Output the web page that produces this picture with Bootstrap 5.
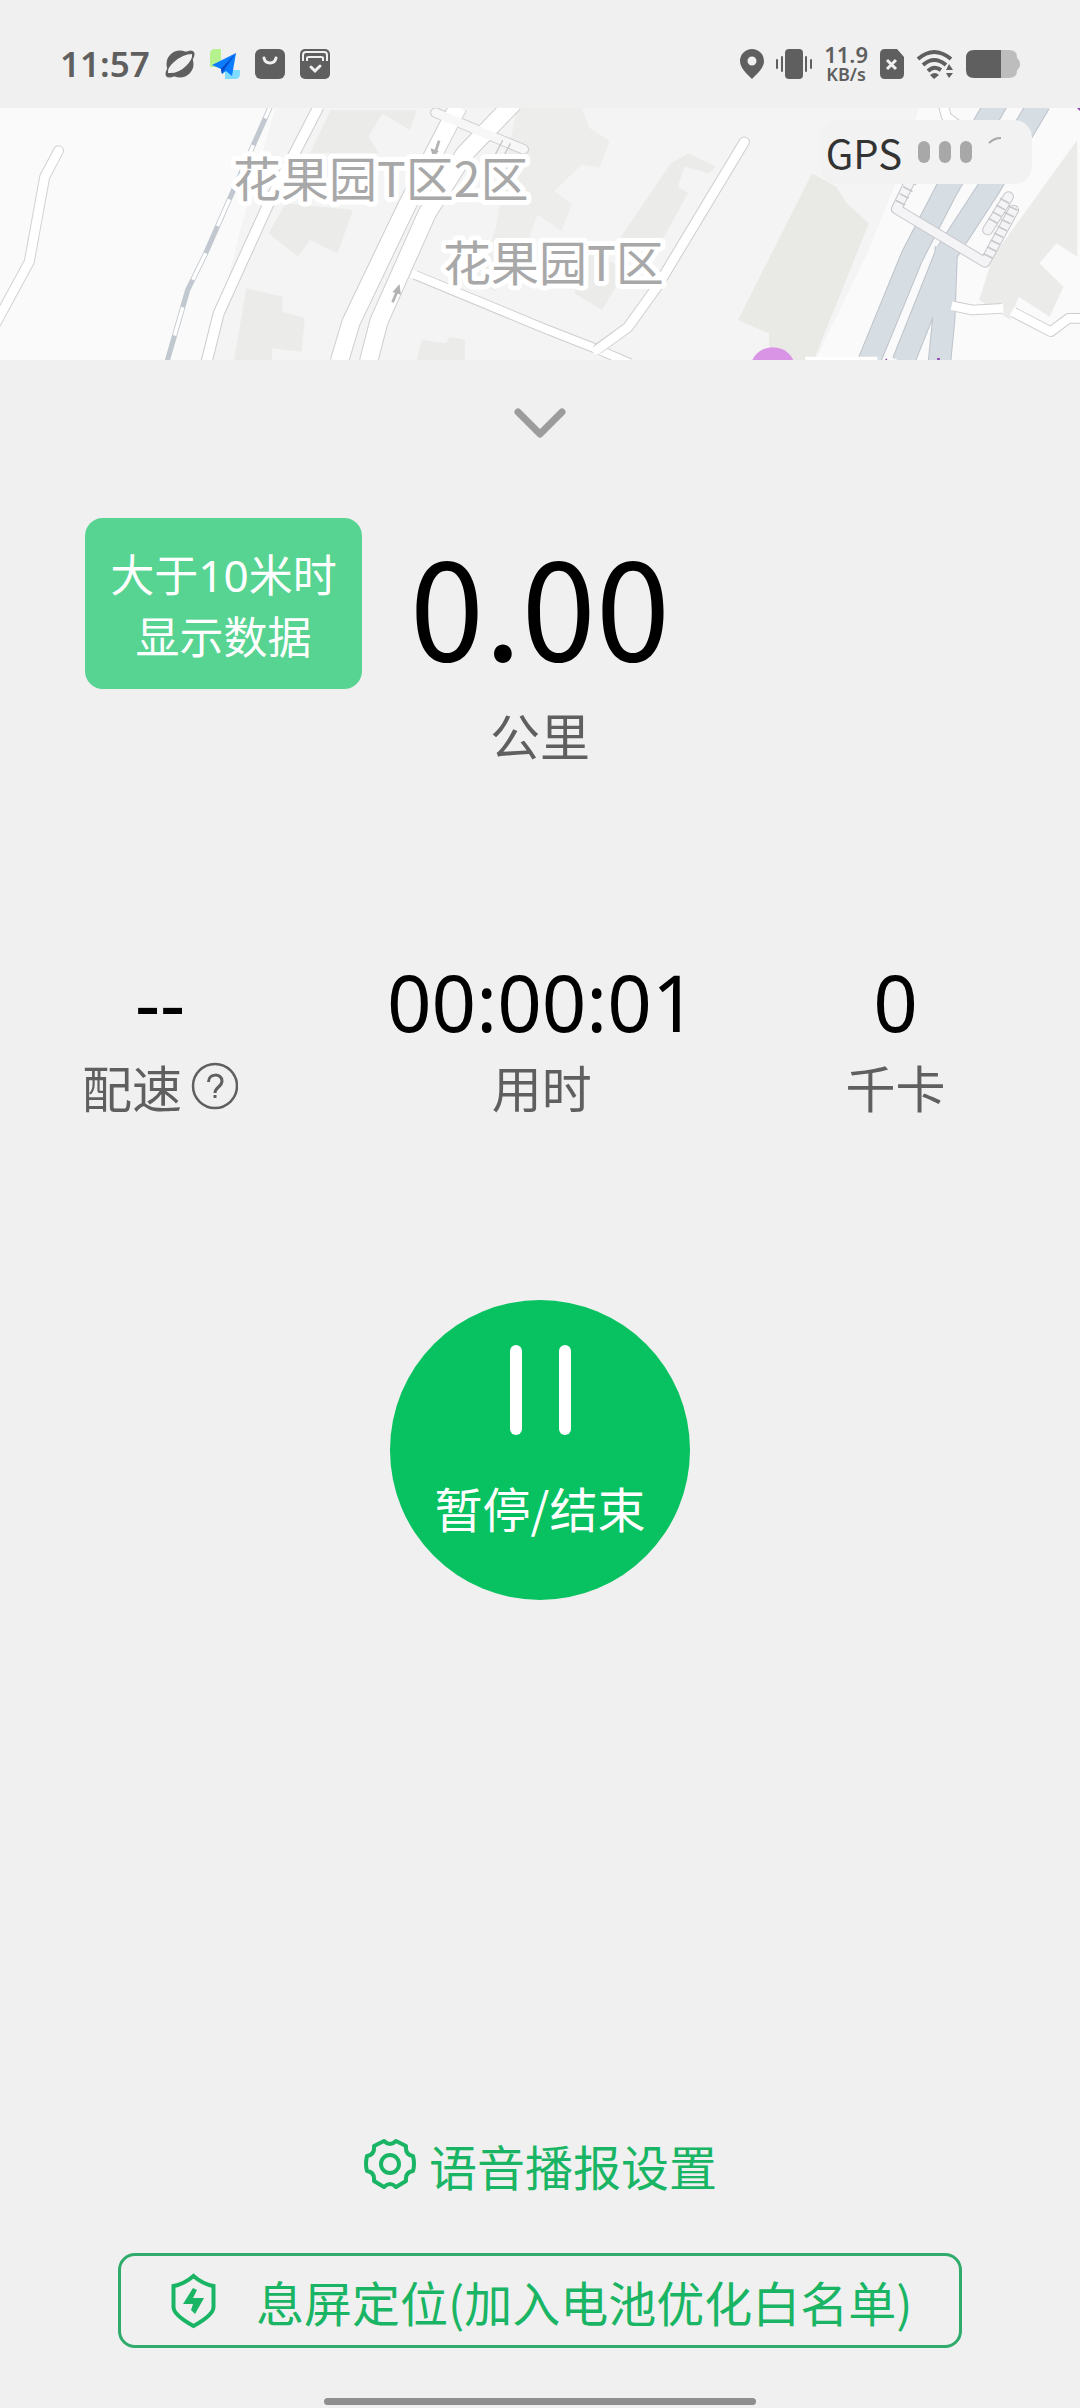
<!DOCTYPE html>
<html lang="zh-CN">
<head>
<meta charset="utf-8">
<meta name="viewport" content="width=device-width, initial-scale=1">
<title>跑步</title>
<link rel="stylesheet" href="https://cdn.jsdelivr.net/npm/bootstrap@5.3.0/dist/css/bootstrap.min.css">
<style>
:root{--run-green:#08c160;--run-link:#19b564;--ink-soft:#5f5f5f}
body{background:#f0f0f0;color:#000;font-family:"Noto Sans CJK SC",sans-serif}
svg{display:block;flex:none}
.clock,.net-rate,.net-unit,.stat-num,.tip{font-family:"Noto Sans","Noto Sans CJK SC",sans-serif}
.status-bar{height:108px;padding:20px 60px 0;color:var(--ink-soft)}
.status-left{gap:15px}
.status-right{gap:12px}
.clock{font-size:35px;line-height:40px;font-weight:600}
.net-rate{font-size:22px;line-height:20px;font-weight:600}
.net-unit{font-size:18px;line-height:20px;font-weight:600}
.map-pane{height:252px;background:#fafafa}
.map-pane>svg{width:100%;height:100%}
.map-label{font-size:48px;fill:#a8a8a8;stroke:#fff;stroke-width:10px;stroke-linejoin:round;paint-order:stroke}
.gps-pill{top:12px;right:48px;height:64px;padding:0 30px 0 6px;background:#f2f2f2;border-radius:18px}
.gps-text{font-size:40px;line-height:48px;color:#333}
.gps-dots{gap:9px}
.gps-dot{width:12px;height:22px;border-radius:6px;background:#a8a8a8}
.collapse-btn{height:126px;color:#9c9c9c}
.distance{margin-top:32px}
.side{flex:1 1 0}
.tip{margin-left:85px;width:277px;padding:26px 8px 21px;border-radius:18px;background:#57d491;color:#fff;font-size:44px;line-height:62px}
.big-num{font-size:134px;line-height:134px;padding-top:18px}
.unit-label{font-size:50px;line-height:60px;color:var(--ink-soft)}
.distance .unit-label{margin-top:34px}
.stats{margin-top:198px;padding-left:82px;gap:149px}
.stat-num{font-size:78px;line-height:80px}
.stats .unit-label{margin-top:14px}
.pause-btn{width:300px;height:300px;margin-top:184px;padding-top:45px;background:var(--run-green);color:#fff;font-size:48px;line-height:60px}
.pause-bars{gap:37px;margin-bottom:42px}
.pause-bar{width:12px;height:90px;border-radius:6px;background:#fff}
.voice-link{color:var(--run-link);font-size:48px;line-height:60px;gap:12px}
.lock-btn{margin:58px 118px 50px;height:95px;border:3px solid #2fab6c;border-radius:17px;color:var(--run-link);font-size:48px;line-height:60px;padding:0 20px 0 50px;gap:40px}
.home-bar{width:40%;height:7px;border-radius:4px;background:#8f8f8f;margin-bottom:3px}
</style>
<script src="https://cdn.jsdelivr.net/npm/bootstrap@5.3.0/dist/js/bootstrap.bundle.min.js"></script>
</head>
<body>
<div class="d-flex flex-column min-vh-100">
<header class="status-bar d-flex align-items-center justify-content-between">
  <div class="status-left d-flex align-items-center">
    <span class="clock">11:57</span>
    <svg width="30" height="30" viewBox="0 0 30 30"><circle cx="15" cy="15" r="13.500" fill="#5f5f5f"/><path d="M20 3q7-3 9 0 2 4-4 11zM10 27q-7 3-9 0-2-4 4-11z" fill="#5f5f5f"/><path d="M3 24q-1-5 6-11Q18 5 27 5q1 5-6 12-8 8-18 7z" fill="#f0f0f0"/></svg>
    <svg width="30" height="30" viewBox="0 0 30 30"><path d="M5 0h6v18H0V5q0-5 5-5z" fill="#b5f28e"/><path d="M15 21h15v4q0 5-5 5H15z" fill="#7fdcff"/><path d="M26 4 2 16l9 4 1 5 4-3 6 5z" fill="#0a7cff"/><path d="M26 4 11 20l1 5 2-4z" fill="#0549c9"/></svg>
    <svg width="30" height="30" viewBox="0 0 30 30"><rect width="30" height="30" rx="6" fill="#5f5f5f"/><path d="M9 9q1 5 6 5t6-5" fill="none" stroke="#f0f0f0" stroke-width="3" stroke-linecap="round"/></svg>
    <svg width="30" height="30" viewBox="0 0 30 30"><rect width="30" height="30" rx="5" fill="#5f5f5f"/><path d="M3 12V6q0-3 3-3h18q3 0 3 3v6M7 12V9q0-1 2-1h12q2 0 2 1v3" fill="none" stroke="#f0f0f0" stroke-width="2"/><path d="m11 18 4 4 5-5" fill="none" stroke="#f0f0f0" stroke-width="3" stroke-linecap="round"/></svg>
  </div>
  <div class="status-right d-flex align-items-center">
    <svg width="24" height="30" viewBox="0 0 24 30"><path fill-rule="evenodd" d="M12 0a12 12 0 0 1 12 12c0 7-7 13-12 18C7 25 0 19 0 12A12 12 0 0 1 12 0zm0 7.500a4.500 4.500 0 1 0 0 9 4.500 4.500 0 0 0 0-9z" fill="#5f5f5f"/></svg>
    <svg width="36" height="30" viewBox="0 0 36 30"><rect x="9" width="18" height="30" rx="4" fill="#5f5f5f"/><path d="M1 11v8M6 8v14M30 8v14M35 11v8" stroke="#5f5f5f" stroke-width="2" stroke-linecap="round"/></svg>
    <div class="text-center"><div class="net-rate">11.9</div><div class="net-unit">KB/s</div></div>
    <svg width="24" height="30" viewBox="0 0 24 30"><path d="M5 0h12l7 8v17q0 5-5 5H5q-5 0-5-5V5q0-5 5-5z" fill="#5f5f5f"/><path d="m7 11 9 9M16 11l-9 9" stroke="#f0f0f0" stroke-width="3"/></svg>
    <svg width="38" height="30" viewBox="1 0 38 30"><g fill="none" stroke="#5f5f5f" stroke-width="4"><path d="M3 10q16-14 33 0M8 16q11-10 23 0M13 22q6-6 13-1"/></g><path d="m15 26 4 4 5-4q-4-4-9 0z" fill="#5f5f5f"/><path d="m34 15 4 6h-7zM34 29l4-5h-7z" fill="#5f5f5f"/></svg>
    <svg width="54" height="28" viewBox="0 0 54 28"><path d="M35 0h8q8 0 8 7v1q3 2 3 6t-3 6v1q0 7-8 7h-8z" fill="#bdbdbd"/><path d="M8 0h27v28H8q-8 0-8-8V8q0-8 8-8z" fill="#5f5f5f"/></svg>
  </div>
</header>

<section class="map-pane position-relative overflow-hidden" aria-label="地图">
<svg viewBox="0 0 1080 252" preserveAspectRatio="xMidYMid slice">
  <g transform="translate(0 -108) scale(.3444 .33333)">
    <path d="M800 323H3200V1080H580L640 930 700 680z" fill="#f3f4f3"/>
    <path d="M960 330h250l-20 60-80-50-40 70 30 50H900zM830 610l195 20-45 130-80-40-35 50-85-70zM715 865l105 25v45l65 20-10 100-85-10v35H680zM1210 1080l15-60 70 10 10-20 45 10v60z" fill="#ebece9"/>
    <path d="M1500 323h190l20 60 60 40-30 80-50-10-80 80 50 40-30 80-70-50-50 150-70 80-60-20 60-170z" fill="#ededeb"/>
    <path d="M170 452 130 530 85 785-20 985" fill="none" stroke="#d2d2d4" stroke-width="32" stroke-linecap="round" stroke-linejoin="round"/>
    <path d="M170 452 130 530 85 785-20 985" fill="none" stroke="#fff" stroke-width="26" stroke-linecap="round" stroke-linejoin="round"/>
    <path d="M785 320 725 460 595 765 545 870 485 1085" fill="none" stroke="#c2c8cf" stroke-width="15"/>
    <path d="M785 320 725 460 595 765 545 870 485 1085" fill="none" stroke="#fff" stroke-width="10" stroke-dasharray="88 88" stroke-dashoffset="50"/>
    <g fill="none" stroke="#cfcfd1" stroke-linejoin="round">
      <path d="M925 320 780 610 635 940 600 1085" stroke-width="35"/>
      <path d="M1330 320 1180 620 1020 965 985 1085M1490 310 1350 460 1240 640 1100 965 1070 1085" stroke-width="56"/>
      <path d="M1205 825 1580 985 1740 1050 1830 1090" stroke-width="30"/>
      <path d="M1265 338 1520 448" stroke-width="32" stroke-linecap="round"/>
    </g>
    <g fill="none" stroke="#fff" stroke-linejoin="round">
      <path d="M925 320 780 610 635 940 600 1085" stroke-width="29"/>
      <path d="M1330 320 1180 620 1020 965 985 1085M1490 310 1350 460 1240 640 1100 965 1070 1085" stroke-width="50"/>
      <path d="M1195 820 1580 985 1740 1050 1830 1090" stroke-width="24"/>
      <path d="M1265 338 1520 448" stroke="#f7f7f7" stroke-width="26" stroke-linecap="round"/>
    </g>
    <path d="m1275 422-10 32M1140 907l12-30" stroke="#b3b3b3" stroke-width="8"/><path d="m1250 445 24 8-16 22zM1160 852l4 32-24-8z" fill="#b3b3b3"/>
    <path d="m1460 420-25 50M1482 430l-18 36M1435 465l45 15-10 30" fill="none" stroke="#c8c8ca" stroke-width="4"/>
  </g>
  <g transform="translate(540 -108) scale(.3444 .33333)">
    <path d="M1100 323h480v757H800l150-320 90-230z" fill="#fafafb"/>
    <path d="M790 520 860 560l30 50 65 60-160 410h-130v-80l-90-40z" fill="#e9eae6"/>
    <path d="M380 490l50-30 80 40-20 20-70-20-20 60 30 20-70 130-50 60-75-60zM140 750l110 60-70 120-80-50zM1560 420v350l-60-40-50 60 70 70-40 90-90-60-25 70-90-60 40-130z" fill="#ebecea"/>
    <path d="M593 426 340 860 255 982 170 1045" fill="none" stroke="#d0d0cf" stroke-width="33" stroke-linecap="round" stroke-linejoin="round"/>
    <path d="M593 426 340 860 255 982 165 1050" fill="none" stroke="#fff" stroke-width="27" stroke-linecap="round" stroke-linejoin="round"/>
    <g fill="none" stroke-linejoin="round">
      <path d="M1330 300 1180 570 1080 770 955 1085M1450 310 1300 570 1180 760 1055 1085M1180 740 1172 960 1160 1085" stroke="#bfc4cb" stroke-width="68"/>
      <path d="M1330 300 1180 570 1080 770 955 1085M1450 310 1300 570 1180 760 1055 1085M1180 740 1172 960 1160 1085" stroke="#d6dde3" stroke-width="62"/>
      <path d="M1170 310 1180 350 1225 385M1200 918 1255 930 1340 925M1375 937 1483 995 1535 955 1580 955" stroke="#cfcfd1" stroke-width="32"/>
      <path d="M1170 310 1180 350 1225 385M1195 917 1255 930 1345 925M1370 934 1483 995 1535 955 1580 955" stroke="#fff" stroke-width="26"/>
      <path d="M1085 520 1035 627 1292 787 1375 630M1360 590 1300 690" stroke="#c8c8cc" stroke-width="32" stroke-linecap="round" stroke-linejoin="round"/>
      <path d="M1085 520 1035 627 1292 787 1375 630M1360 590 1300 690" stroke="#f4f4f6" stroke-width="26" stroke-linecap="round"/>
      <path d="M1080 545 1042 617M1300 770 1375 620M1350 600 1305 680" stroke="#c8c8cc" stroke-width="30" stroke-dasharray="5 18"/>
    </g>
    <ellipse cx="676" cy="1102" rx="64" ry="60" fill="#d994e6"/>
    <path d="M770 1070h210v12H770z" fill="#fff"/><path d="M1153 1074h8v8h-8zM1003 1076h5v6h-5zM1558 323h12v12z" fill="#8e4bb5"/>
  </g>
  <text class="map-label" x="233" y="89">花果园T区2区</text>
  <text class="map-label" x="443" y="173">花果园T区</text>
</svg>
<div class="gps-pill position-absolute d-flex align-items-center">
  <span class="gps-text me-3">GPS</span>
  <span class="gps-dots d-flex"><i class="gps-dot"></i><i class="gps-dot"></i><i class="gps-dot"></i></span>
  <svg class="ms-3 mb-4" width="14" height="8" viewBox="0 0 14 8"><path d="M1 7q5-5 12-5" fill="none" stroke="#a8a8a8" stroke-width="2"/></svg>
</div>
</section>

<main class="d-flex flex-column">
  <button type="button" class="collapse-btn btn border-0 rounded-0 p-0 d-flex align-items-center justify-content-center" aria-label="收起">
    <svg width="54" height="32" viewBox="0 0 54 32"><path d="m5 5 22 22L49 5" fill="none" stroke="currentColor" stroke-width="7" stroke-linecap="round" stroke-linejoin="round"/></svg>
  </button>
  <section class="distance d-flex align-items-start">
    <div class="side"><div class="tip text-center">大于10米时<br>显示数据</div></div>
    <div class="text-center"><div class="big-num">0.00</div><div class="unit-label">公里</div></div>
    <div class="side"></div>
  </section>
  <section class="stats d-flex text-center">
    <div><div class="stat-num">--</div>
      <div class="unit-label d-flex align-items-center">配速
        <svg class="ms-2" width="48" height="48" viewBox="0 0 48 48" role="img" aria-label="说明"><circle cx="25" cy="24" r="22" fill="none" stroke="#5f5f5f" stroke-width="2.500"/><path d="M18.500 20c0-9 13.500-9 13.500-1 0 6-7 6-7 12M25 33v3" fill="none" stroke="#5f5f5f" stroke-width="3"/></svg>
      </div></div>
    <div><div class="stat-num">00:00:01</div><div class="unit-label">用时</div></div>
    <div><div class="stat-num">0</div><div class="unit-label">千卡</div></div>
  </section>
  <button type="button" class="pause-btn border-0 rounded-circle align-self-center d-flex flex-column align-items-center">
    <span class="pause-bars d-flex"><i class="pause-bar"></i><i class="pause-bar"></i></span>
    <span>暂停/结束</span>
  </button>
</main>

<footer class="mt-auto d-flex flex-column">
  <a href="#" class="voice-link text-decoration-none d-flex align-items-center align-self-center">
    <svg width="54" height="54" viewBox="0 0 54 54" fill="none" stroke="currentColor" stroke-width="4" stroke-linejoin="round"><path d="M21 3q6 6 12 0l10 5q-1 9 7 10 2 8 0 15-8 1-7 10l-10 6q-6-6-12 0l-10-6q1-9-7-10-2-7 0-15 8-1 7-10z"/><circle cx="27" cy="26" r="9"/></svg>
    <span>语音播报设置</span>
  </a>
  <button type="button" class="lock-btn bg-transparent d-flex align-items-center">
    <svg width="45" height="56" viewBox="0 0 45 56"><path d="M22.500 3q9 8 20 10v21q0 8-20 19-20-11-20-19V13q11-2 20-10z" fill="none" stroke="currentColor" stroke-width="4"/><path d="m22 15-10 16h10l-2 6 4 4 9-16H22l4-8z" fill="currentColor"/></svg>
    <span>息屏定位(加入电池优化白名单)</span>
  </button>
  <div class="home-bar align-self-center"></div>
</footer>
</div>
</body>
</html>
